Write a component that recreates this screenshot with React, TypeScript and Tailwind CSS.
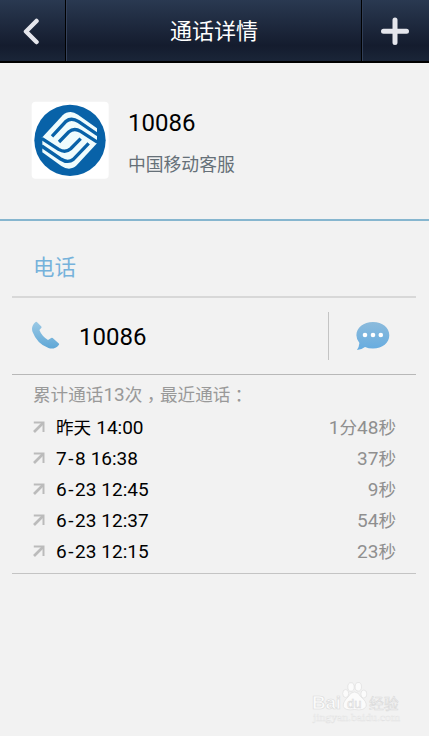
import React from 'react';

interface ICall {
  day: string;
  time: string;
  minutes?: string;
  seconds: string;
}

const calls: ICall[] = [
  { day: '昨天', time: '14:00', minutes: '1', seconds: '48' },
  { day: '7-8', time: '16:38', seconds: '37' },
  { day: '6-23', time: '12:45', seconds: '9' },
  { day: '6-23', time: '12:37', seconds: '54' },
  { day: '6-23', time: '12:15', seconds: '23' },
];

const CarrierLogo: React.FC = () => (
  <svg viewBox="3 3 234 234" className="block h-[78px] w-[78px]">
    <rect x="5" y="5" width="231" height="231" rx="12" fill="#fff" />
    <circle cx="120" cy="121" r="107" fill="#0862a8" />
    <path
      fill="#effcfd"
      d="M37 112 L98 46 Q108 36 122 36 Q132 36 144 44 L201 85 V130 L140 196 Q130 206 117 206 Q106 206 94 198 L37 157 Z"
    />
    <g fill="none" stroke="#0862a8" strokeWidth="10">
      <path d="M203 104 L146 65 Q124 51 108 64 L66 109" />
      <path d="M203 127 L152 94 Q132 82 116 96 L87 126" />
      <path d="M35 138 L92 177 Q114 191 130 178 L176 130" />
      <path d="M35 115 L86 148 Q106 160 122 146 L152 116" />
    </g>
  </svg>
);

const PhoneIcon: React.FC = () => (
  <svg viewBox="0 0 30 30" className="block h-[30px] w-[30px]">
    <defs>
      <linearGradient id="phone" x1="0" y1="0" x2="0" y2="1">
        <stop offset="0" stopColor="#9bc9e5" />
        <stop offset="1" stopColor="#5fa7d6" />
      </linearGradient>
    </defs>
    <path
      fill="url(#phone)"
      d="M4.6 .9 Q5.2 .4 5.9 1 L10.3 5.5 Q10.8 6.2 10.2 6.9 L8.4 9.1 Q10.8 15.3 17 19.1 L20.2 17 Q21 16.5 21.7 17.1 L27.8 22.6 Q28.5 23.2 27.8 23.9 Q23.5 29 17.5 27.1 Q6 22.7 1.5 10.7 Q-.3 5.2 4.6 .9 Z"
    />
  </svg>
);

const MessageIcon: React.FC = () => (
  <svg viewBox="0 0 34 30" className="block h-[30px] w-[34px]">
    <defs>
      <linearGradient id="message" x1="0" y1="0" x2="0" y2="1">
        <stop offset="0" stopColor="#8cbbdc" />
        <stop offset="1" stopColor="#66ace0" />
      </linearGradient>
    </defs>
    <path
      fill="url(#message)"
      d="M17 1 C26.5 1 33.3 6.8 33.3 14.2 C33.3 21.8 26.5 27.5 17 27.5 Q12.5 27.5 9 26 Q5.5 28.8 1 29 Q3 26.5 3.4 22 Q.4 18.4 .4 14.2 C.4 6.8 7.5 1 17 1 Z"
    />
    <g fill="#fff">
      <circle cx="9" cy="14" r="2.3" />
      <circle cx="17" cy="14" r="2.3" />
      <circle cx="24.8" cy="14" r="2.3" />
    </g>
  </svg>
);

const OutgoingIcon: React.FC = () => (
  <svg viewBox="0 0 12 12" className="block h-3 w-3" fill="none" stroke="#bbb" strokeWidth="2">
    <path d="M.8 1.5 H10.5 V11" />
    <path strokeWidth="2.6" d="M10 2 L1 11" />
  </svg>
);

const Watermark: React.FC = () => (
  <svg viewBox="0 0 95 50" className="block h-[50px] w-[95px]" fill="#fbfbfb" stroke="#dadada" strokeWidth=".6">
    <text x="2" y="31" fontSize="19" fontWeight="700" textLength="29" fontFamily="Liberation Sans, sans-serif">
      Bai
    </text>
    <ellipse cx="35.7" cy="15.5" rx="3" ry="4" />
    <ellipse cx="41" cy="9" rx="3.2" ry="4.3" />
    <ellipse cx="48.3" cy="8.8" rx="3.2" ry="4.3" />
    <ellipse cx="53.8" cy="16" rx="3" ry="4" />
    <path d="M44.5 14 Q48.5 14 50.5 18.5 Q57.5 24 56 28.5 Q54 33 44.5 31.5 Q35 33 33.3 28.5 Q32.5 24 38.5 18.5 Q40.5 14 44.5 14 Z" />
    <text x="37" y="29.5" fontSize="13" fontFamily="Liberation Sans, sans-serif">
      du
    </text>
    <text x="59" y="31" fontSize="14.8" fontFamily="Noto Sans CJK SC, sans-serif">
      经验
    </text>
    <text x="3" y="43" fontSize="11" stroke="#e2e2e2" strokeWidth=".4" textLength="87" lengthAdjust="spacingAndGlyphs" fontFamily="Liberation Serif, serif">
      jingyan.baidu.com
    </text>
  </svg>
);

const CallDay: React.FC<{ day: string }> = ({ day }) => {
  const [month, date] = day.split('-');

  if (!date) {
    return <span className="pr-[5px] text-[17.6px]">{day}</span>;
  }
  return (
    <span className="pr-[5px]">
      {month}
      <span className="px-[1.5px]">-</span>
      {date}
    </span>
  );
};

const App: React.FC = () => {
  return (
    <div className="flex h-[736px] w-[429px] flex-col bg-[#f2f2f2] font-['Roboto','Noto_Sans_CJK_SC',sans-serif] text-black">
      <header className="flex h-[63px] shrink-0 border-b-2 border-black bg-linear-to-b from-[#2a3951] via-[#141c2e] via-75% to-[#1a2538]">
        <button className="flex w-[66px] items-center justify-center border-r border-black pr-1">
          <svg viewBox="0 0 18 28" className="h-7 w-[18px]" fill="none" stroke="#e5e6ec" strokeWidth="4.5" strokeLinecap="round" strokeLinejoin="round">
            <path d="M14.5 4 L4 14.5 L14.5 25" />
          </svg>
        </button>
        <h1 className="flex flex-1 items-center justify-center border-r border-l border-r-black border-l-[#34415a] pt-0.5 text-[22px] leading-none text-white">
          通话详情
        </h1>
        <button className="flex w-[67px] items-center justify-center border-l border-[#303e56] pr-0.5">
          <svg viewBox="0 0 28 28" className="h-7 w-7" fill="none" stroke="#e5e6ec" strokeWidth="5" strokeLinecap="round">
            <path d="M14 3 V25.5 M2.5 14.2 H25.5" />
          </svg>
        </button>
      </header>

      <section className="flex h-[158px] shrink-0 border-b-2 border-[#86b6cf] pt-[38px] pl-[31px]">
        <CarrierLogo />
        <div className="flex flex-col pt-2 pl-[19px]">
          <p className="text-2xl leading-[28px]">10086</p>
          <p className="pt-4 text-[17.8px] leading-6 text-[#667078]">中国移动客服</p>
        </div>
      </section>

      <main className="flex flex-col pr-[13px] pl-3">
        <h2 className="h-[77px] border-b-2 border-[#d8d8d8] pt-[34px] pl-[21px] text-[21.5px] leading-[26px] text-[#76b2db]">电话</h2>
        <div className="flex h-[77px] items-center border-b border-[#b8b8b8] pl-[19px]">
          <PhoneIcon />
          <span className="flex-1 pt-0.5 pl-[18px] text-2xl">10086</span>
          <button className="flex h-12 w-[88px] items-center justify-center border-l border-[#c4c4c4]">
            <MessageIcon />
          </button>
        </div>

        <div className="flex h-[199px] flex-col border-b border-[#c4c4c4] pt-2 pr-[20px] pl-[21px]">
          <p className="flex h-[28px] items-start text-[17.6px] leading-6 whitespace-nowrap text-[#999]">
            累计通话<span className="text-[19px]">13</span>次
            <span className="pt-1 font-['Noto_Sans_CJK_TC',sans-serif]">，</span>
            最近通话
            <span className="font-['Noto_Sans_CJK_TC',sans-serif]">：</span>
          </p>
          {calls.map((call) => (
            <div key={`${call.day} ${call.time}`} className="flex h-[31px] items-center text-[19px]">
              <OutgoingIcon />
              <span className="flex-1 pt-[3px] pl-[11px]">
                <CallDay day={call.day} />
                {call.time}
              </span>
              <span className="pt-[3px] text-[#8f8f8f]">
                {call.minutes}
                {call.minutes && <span className="text-[17.6px]">分</span>}
                {call.seconds}
                <span className="text-[17.6px]">秒</span>
              </span>
            </div>
          ))}
        </div>
      </main>

      <footer className="mt-auto flex justify-end pr-6 pb-2">
        <Watermark />
      </footer>
    </div>
  );
};

export default App;
